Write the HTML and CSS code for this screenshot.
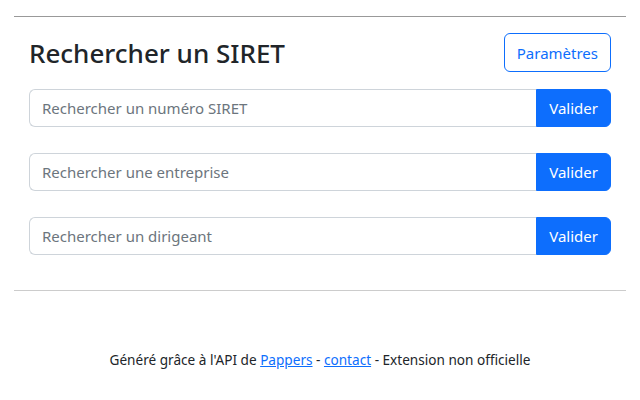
FILE: index.html
```html
<!DOCTYPE html>
<html lang="fr">
<head>
    <meta charset="UTF-8">
    <title>Rechercher un SIRET</title>
    <link rel="stylesheet" href="styles.css">
</head>
<body>
    <hr class="sep top">
    <div class="container">
        <div class="header">
            <h2 class="title">Rechercher un SIRET</h2>
            <button class="btn btn-outline">Paramètres</button>
        </div>
        <div class="input-group">
            <input type="text" placeholder="Rechercher un numéro SIRET">
            <button class="btn btn-primary">Valider</button>
        </div>
        <div class="input-group">
            <input type="text" placeholder="Rechercher une entreprise">
            <button class="btn btn-primary">Valider</button>
        </div>
        <div class="input-group">
            <input type="text" placeholder="Rechercher un dirigeant">
            <button class="btn btn-primary">Valider</button>
        </div>
    </div>
    <hr class="sep bottom">
    <footer class="footer">
        Généré grâce à l'API de <a href="#">Pappers</a> - <a href="#">contact</a> - Extension non officielle
    </footer>
</body>
</html>
```

FILE: styles.css
```css
body {
    font-family: "Noto Sans", "Open Sans", sans-serif;
    color: #212529;
    background-color: #fff;
    margin: 0;
    padding: 16px 14px 0;
}

.sep {
    border: none;
    margin: 0;
    height: 1px;
}

.sep.top {
    background-color: #999;
}

.sep.bottom {
    background-color: #ccc;
}

.container {
    padding: 16px 15px 35px;
}

.header {
    display: flex;
    justify-content: space-between;
    align-items: center;
    margin-bottom: 17px;
}

.title {
    font-size: 26px;
    font-weight: 500;
    margin: 0;
}

.btn {
    font-family: inherit;
    font-size: 15px;
    padding: 0 12px;
    height: 39px;
    border-radius: 6px;
    cursor: pointer;
}

.btn-outline {
    background-color: #fff;
    color: #0d6efd;
    border: 1px solid #0d6efd;
}

.btn-primary {
    background-color: #0d6efd;
    color: #fff;
    border: 1px solid #0d6efd;
    height: 38px;
    border-radius: 0 6px 6px 0;
}

.input-group {
    display: flex;
    margin-bottom: 26px;
}

.input-group:last-child {
    margin-bottom: 0;
}

.input-group input {
    flex: 1;
    height: 38px;
    box-sizing: border-box;
    border: 1px solid #ced4da;
    border-right: none;
    border-radius: 6px 0 0 6px;
    padding: 0 12px;
    font-family: inherit;
    font-size: 15px;
    color: #212529;
}

.input-group input::placeholder {
    color: #6c757d;
}

.footer {
    text-align: center;
    font-size: 13.6px;
    padding-top: 59px;
}

.footer a {
    color: #0d6efd;
}
```
